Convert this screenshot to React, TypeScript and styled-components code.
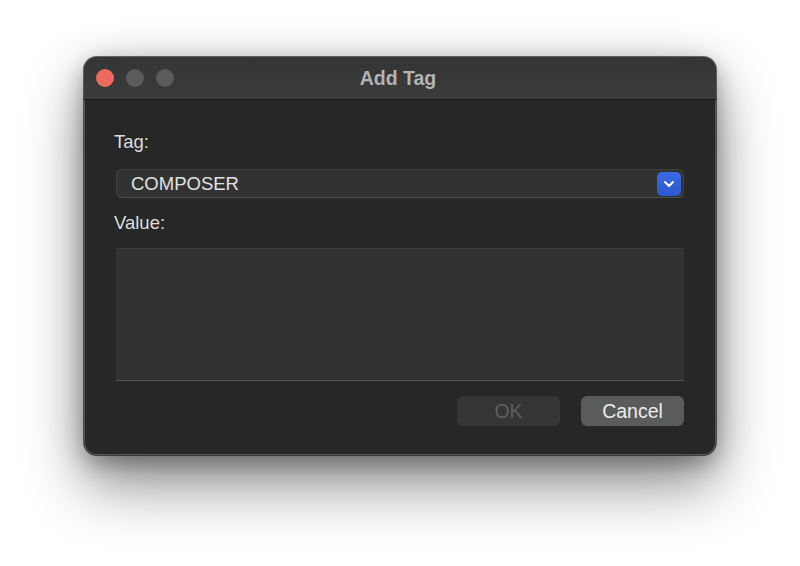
import styled, { createGlobalStyle } from "styled-components";

const GlobalStyle = createGlobalStyle`
  html, body {
    margin: 0;
    padding: 0;
    background: #ffffff;
    font-family: "Liberation Sans", Arial, sans-serif;
  }
`;

const Page = styled.div`
  width: 800px;
  height: 566px;
  box-sizing: border-box;
  padding: 57px 0 0 84px;
  background: #ffffff;
`;

const Window = styled.div`
  width: 632px;
  height: 398px;
  box-sizing: border-box;
  display: flex;
  flex-direction: column;
  border-radius: 13px;
  overflow: hidden;
  background: #262727;
  box-shadow: inset 0 0 0 1px #545555, 0 0 0 1px rgba(0, 0, 0, 0.55),
    0 30px 60px rgba(0, 0, 0, 0.45), 0 8px 20px rgba(0, 0, 0, 0.25),
    0 0 40px rgba(0, 0, 0, 0.12);
`;

const TitleBar = styled.div`
  position: relative;
  height: 42px;
  flex-shrink: 0;
  display: flex;
  align-items: center;
  justify-content: center;
  background: linear-gradient(#343535, #3a3b3b);
  border-bottom: 1px solid #161717;
`;

const Lights = styled.div`
  position: absolute;
  left: 12px;
  top: 12px;
  display: flex;
  gap: 12px;
`;

const Light = styled.span<{ $color: string }>`
  width: 18px;
  height: 18px;
  border-radius: 50%;
  background: ${(p) => p.$color};
`;

const Title = styled.div`
  font-size: 19.5px;
  font-weight: 700;
  color: #b3b3b3;
  margin-left: -4px;
`;

const Body = styled.div`
  flex: 1;
  display: flex;
  flex-direction: column;
  padding: 32px 32px 0 30px;
`;

const Label = styled.div<{ $gap: number }>`
  font-size: 18.5px;
  line-height: 20px;
  color: #dcdcdc;
  margin-bottom: ${(p) => p.$gap}px;
`;

const Select = styled.div`
  margin-left: 2px;
  height: 29px;
  box-sizing: border-box;
  display: flex;
  align-items: center;
  justify-content: space-between;
  padding: 0 2px 0 14px;
  border-radius: 6px;
  background: #313232;
  border: 1px solid #3f4040;
  border-bottom-color: #4c4d4d;
  margin-bottom: 15px;
`;

const SelectText = styled.span`
  font-size: 18.5px;
  color: #e2e2e2;
`;

const Chevron = styled.span`
  width: 24px;
  height: 24px;
  border-radius: 5px;
  display: flex;
  align-items: center;
  justify-content: center;
  background: linear-gradient(#3a6ae4, #2c58cf);
`;

const TextArea = styled.div`
  margin-left: 2px;
  height: 133px;
  box-sizing: border-box;
  background: #313232;
  border-top: 1px solid #383939;
  border-bottom: 1px solid #555656;
  margin-bottom: 15px;
`;

const Buttons = styled.div`
  display: flex;
  justify-content: flex-end;
  gap: 21px;
`;

const Button = styled.button<{ $disabled?: boolean }>`
  width: 103px;
  height: 30px;
  border: none;
  border-radius: 6px;
  font-family: inherit;
  font-size: 19.5px;
  padding: 0;
  background: ${(p) => (p.$disabled ? "#343535" : "#5a5b5b")};
  color: ${(p) => (p.$disabled ? "#5e5f5f" : "#ececec")};
`;

export default function App() {
  return (
    <>
      <GlobalStyle />
      <Page>
        <Window>
          <TitleBar>
            <Lights>
              <Light $color="#ec6a5e" />
              <Light $color="#5a5b5b" />
              <Light $color="#5a5b5b" />
            </Lights>
            <Title>Add Tag</Title>
          </TitleBar>
          <Body>
            <Label $gap={17}>Tag:</Label>
            <Select>
              <SelectText>COMPOSER</SelectText>
              <Chevron>
                <svg width="12" height="8" viewBox="0 0 12 8">
                  <path
                    d="M2 2 L6 6 L10 2"
                    fill="none"
                    stroke="#ffffff"
                    strokeWidth="2"
                    strokeLinecap="round"
                    strokeLinejoin="round"
                  />
                </svg>
              </Chevron>
            </Select>
            <Label $gap={15}>Value:</Label>
            <TextArea />
            <Buttons>
              <Button $disabled>OK</Button>
              <Button>Cancel</Button>
            </Buttons>
          </Body>
        </Window>
      </Page>
    </>
  );
}
